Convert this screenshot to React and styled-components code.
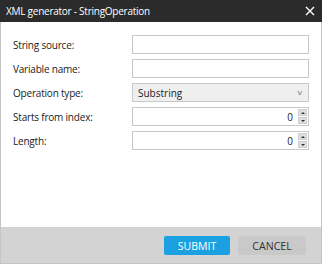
import React from 'react';
import styled, {createGlobalStyle} from 'styled-components';

const Global = createGlobalStyle`
    html, body { margin: 0; padding: 0; background: #ffffff; }
    body { font-family: "Open Sans", "Noto Sans", sans-serif; }
`;

const Dialog = styled.div`
    width: 322px;
    height: 264px;
    box-sizing: border-box;
    border: 1px solid #c4c4c4;
    border-top: none;
    display: flex;
    flex-direction: column;
    background: #ffffff;
`;

const TitleBar = styled.div`
    height: 22px;
    margin: 0 -1px;
    background: #2b2b2b;
    color: #ffffff;
    display: flex;
    align-items: center;
    justify-content: space-between;
    padding: 0 5px 0 6px;
    font-size: 10px;
    letter-spacing: -0.25px;
`;

const Close = styled.svg`
    width: 10px;
    height: 10px;
    margin-right: 2px;
`;

const Body = styled.div`
    flex: 1;
    padding: 13px 12px 0 11px;
    display: grid;
    grid-template-columns: 120px 177px;
    grid-auto-rows: 19px;
    row-gap: 5px;
    align-content: start;
`;

const Label = styled.label`
    font-size: 10px;
    letter-spacing: -0.2px;
    color: #222;
    display: flex;
    align-items: center;
    padding-left: 1px;
`;

const Field = styled.div`
    box-sizing: border-box;
    border: 1px solid #c8c8c8;
    background: ${p => p.grey ? '#efefef' : '#ffffff'};
    display: flex;
    align-items: center;
    font-size: 10px;
    color: #222;
    padding-left: 5px;
`;

const Value = styled.span`
    flex: 1;
    text-align: ${p => p.right ? 'right' : 'left'};
    padding-right: ${p => p.right ? '5px' : '0'};
`;

const Chevron = styled.span`
    font-size: 7px;
    color: #777;
    margin-right: 7px;
    transform: scaleX(1.3);
`;

const Spinner = styled.div`
    align-self: stretch;
    width: 9px;
    margin: 1px 1px 1px 0;
    display: flex;
    flex-direction: column;
    gap: 1px;
`;

const SpinButton = styled.div`
    flex: 1;
    box-sizing: border-box;
    background: #dedede;
    border: 1px solid #cfcfcf;
    display: flex;
    align-items: center;
    justify-content: center;
    &::after {
        content: '';
        border-left: 2px solid transparent;
        border-right: 2px solid transparent;
        ${p => p.down ? 'border-top: 2px solid #333;' : 'border-bottom: 2px solid #333;'}
    }
`;

const Footer = styled.div`
    height: 36px;
    background: #d3d3d3;
    display: flex;
    justify-content: flex-end;
    align-items: center;
    gap: 8px;
    padding: 0 15px 0 0;
`;

const Button = styled.button`
    width: ${p => p.primary ? '66px' : '68px'};
    height: 19px;
    border: none;
    border-radius: 2px;
    background: ${p => p.primary ? '#1ba1e2' : '#c9c9c9'};
    color: ${p => p.primary ? '#ffffff' : '#333'};
    font-family: "Open Sans", "Noto Sans", sans-serif;
    font-size: 10.6px;
    padding: 0;
    margin-top: 1px;
`;

function NumberField({value}) {
    return (
        <Field>
            <Value right>{value}</Value>
            <Spinner>
                <SpinButton />
                <SpinButton down />
            </Spinner>
        </Field>
    );
}

export default function App() {
    return (
        <>
            <Global />
            <Dialog>
                <TitleBar>
                    <span>XML generator - StringOperation</span>
                    <Close viewBox="0 0 10 10">
                        <path d="M1 1L9 9M9 1L1 9" stroke="#fff" strokeWidth="1.4" />
                    </Close>
                </TitleBar>
                <Body>
                    <Label>String source:</Label>
                    <Field />
                    <Label>Variable name:</Label>
                    <Field />
                    <Label>Operation type:</Label>
                    <Field grey>
                        <Value>Substring</Value>
                        <Chevron>v</Chevron>
                    </Field>
                    <Label>Starts from index:</Label>
                    <NumberField value="0" />
                    <Label>Length:</Label>
                    <NumberField value="0" />
                </Body>
                <Footer>
                    <Button primary>SUBMIT</Button>
                    <Button>CANCEL</Button>
                </Footer>
            </Dialog>
        </>
    );
}
